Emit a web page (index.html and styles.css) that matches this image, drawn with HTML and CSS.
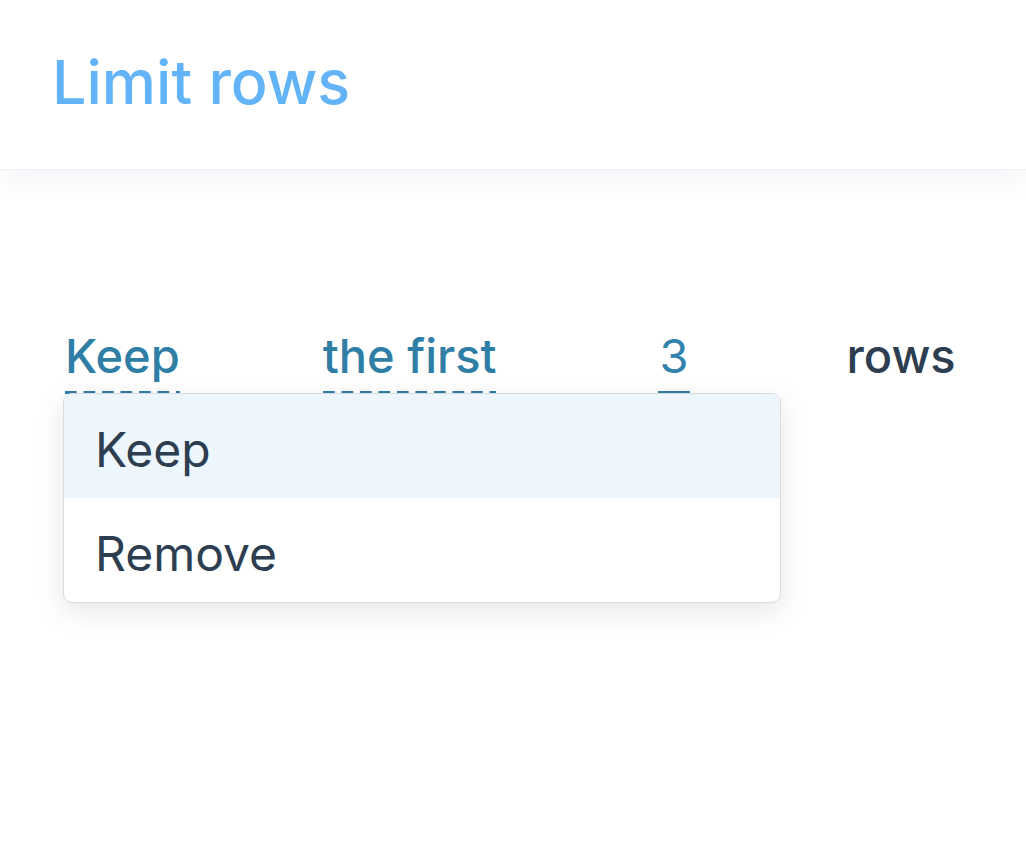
FILE: index.html
```html
<!DOCTYPE html>
<html lang="en">
<head>
<meta charset="utf-8">
<title>Limit rows</title>
<link rel="stylesheet" href="styles.css">
</head>
<body>
<header class="header">
  <h1 class="title">Limit rows</h1>
</header>
<main class="content">
  <div class="sentence">
    <div class="select">
      <span class="token dashed">Keep</span>
      <ul class="menu">
        <li class="menu-item active">Keep</li>
        <li class="menu-item">Remove</li>
      </ul>
    </div>
    <span class="token dashed first">the first</span>
    <span class="token solid count">3</span>
    <span class="word">rows</span>
  </div>
</main>
</body>
</html>
```

FILE: styles.css
```css
* { box-sizing: border-box; }

html, body {
  margin: 0;
  padding: 0;
  height: 100%;
  background: #ffffff;
  font-family: Inter, "Noto Sans", "Liberation Sans", sans-serif;
}

body {
  display: flex;
  flex-direction: column;
}

.header {
  flex: none;
  height: 170px;
  padding: 52px 0 0 52px;
  background: #ffffff;
  border-bottom: 1px solid #eef2f6;
  box-shadow: 0 8px 28px rgba(20, 40, 70, 0.05);
  position: relative;
  z-index: 1;
}

.title {
  margin: 0;
  font-size: 61px;
  line-height: 60px;
  font-weight: 500;
  color: #63b3f9;
}

.content {
  flex: 1;
  padding: 162px 0 0 65px;
}

.sentence {
  display: flex;
  align-items: flex-start;
  font-size: 47px;
  line-height: 47px;
  font-weight: 500;
}

.select {
  position: relative;
  margin-right: 143px;
}

.token {
  display: inline-block;
  color: #2f7ea6;
  padding-bottom: 15px;
  background-repeat: repeat-x;
  background-position: left bottom;
  background-size: 18.5px 3px;
}

.dashed {
  background-image: linear-gradient(to right, #2f7ea6 0 12px, transparent 12px 18.5px);
}

.solid {
  background-image: linear-gradient(#2f7ea6, #2f7ea6);
  background-size: 100% 3px;
}

.first { margin-right: 162px; }

.count {
  margin-right: 157px;
  padding-left: 1px;
  padding-right: 1px;
  font-weight: 400;
  color: #3183ad;
}

.word {
  color: #2c3e50;
}

.menu {
  position: absolute;
  left: -2px;
  top: calc(100% - 1px);
  width: 718px;
  margin: 0;
  padding: 0;
  list-style: none;
  background: #ffffff;
  border: 1px solid #d8dbdf;
  border-radius: 9px;
  box-shadow: 0 8px 28px rgba(0, 0, 0, 0.1);
  overflow: hidden;
  z-index: 2;
}

.menu-item {
  height: 104px;
  padding: 8px 0 0 31px;
  font-size: 48px;
  line-height: 96px;
  font-weight: 400;
  color: #2c3e50;
}

.menu-item.active {
  background: #edf5fd;
}
```
